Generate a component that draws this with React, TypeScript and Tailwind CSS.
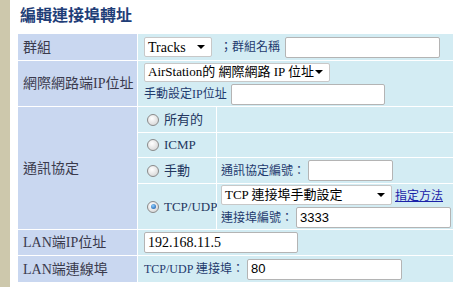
const Radio = ({ checked }: { checked?: boolean }) => (
  <span className="relative inline-block w-[12px] h-[12px] rounded-full border border-[#8a8a8a] bg-[radial-gradient(circle_at_40%_35%,#ffffff,#cfcfcf)] mr-[5px] shrink-0">
    {checked && (
      <span className="absolute left-[2.5px] top-[2.5px] w-[5px] h-[5px] rounded-full bg-[radial-gradient(circle_at_40%_35%,#8fd0ff,#0a4ea0)]" />
    )}
  </span>
);

const Select = ({ text, className }: { text: string; className: string }) => (
  <div
    className={`flex items-center justify-between bg-white border border-[#c8c8c8] rounded-[2px] pl-[3px] pr-[6px] text-[13px] text-black overflow-hidden ${className}`}
  >
    <span className="whitespace-nowrap">{text}</span>
    <span className="w-0 h-0 shrink-0 border-l-[4px] border-r-[4px] border-t-[4px] border-l-transparent border-r-transparent border-t-black" />
  </div>
);

const Input = ({ value, className }: { value?: string; className: string }) => (
  <div
    className={`flex items-center bg-white border border-[#b4b4b4] rounded-[2px] px-[3px] text-[13px] text-black shrink-0 ${className}`}
  >
    {value}
  </div>
);

export default function App() {
  const label = "bg-[#c9d7f0] flex items-center pl-[5px] text-[#3a3a4c] text-[14px] whitespace-nowrap";
  const cell = "bg-[#d3ecf3] flex items-center text-[12px] whitespace-nowrap";

  return (
    <div className="w-[475px] h-[287px] bg-white flex font-['Liberation_Serif','Noto_Sans_CJK_TC',serif] overflow-hidden">
      <div className="w-[10px] bg-[#cdc8ac]" />
      <div className="pl-[8px]">
        <h1 className="h-[33px] pt-[4px] pl-[2px] text-[16px] font-bold text-[#1f3e78] font-['Noto_Sans_CJK_TC',sans-serif] leading-[20px]">
          編輯連接埠轉址
        </h1>
        <div className="grid grid-cols-[119px_78px_236px] grid-rows-[26px_45px_25px_24px_25px_45px_25px_26px] gap-px bg-white w-[435px] mt-px">
          {/* 群組 */}
          <div className={label}>群組</div>
          <div className={`${cell} col-span-2 pl-[6px]`}>
            <Select text="Tracks" className="w-[68px] h-[20px] text-[14px]" />
            <span className="ml-[8px] mr-[5px] text-[#1f3a6e]">；群組名稱</span>
            <Input className="w-[155px] h-[21px]" />
          </div>

          {/* 網際網路端IP位址 */}
          <div className={label}>網際網路端IP位址</div>
          <div className={`${cell} col-span-2 pl-[6px] flex-col !items-start justify-center gap-[2px]`}>
            <Select text="AirStation的 網際網路 IP 位址" className="w-[186px] h-[19px]" />
            <div className="flex items-center">
              <span className="text-[#1f3a6e] mr-[4px]">手動設定IP位址</span>
              <Input className="w-[154px] h-[21px]" />
            </div>
          </div>

          {/* 通訊協定 */}
          <div className={`${label} row-span-4`}>通訊協定</div>
          <div className={`${cell} pl-[9px] text-[#23375f] text-[13px]`}>
            <Radio />
            所有的
          </div>
          <div className={cell} />
          <div className={`${cell} pl-[9px] text-[#23375f] text-[13px]`}>
            <Radio />
            ICMP
          </div>
          <div className={cell} />
          <div className={`${cell} pl-[9px] text-[#23375f] text-[13px]`}>
            <Radio />
            手動
          </div>
          <div className={`${cell} pl-[4px]`}>
            <span className="text-[#1f3a6e] mr-[3px]">通訊協定編號：</span>
            <Input className="w-[85px] h-[21px]" />
          </div>
          <div className={`${cell} pl-[9px] text-[#23375f] text-[13px]`}>
            <Radio checked />
            TCP/UDP
          </div>
          <div className={`${cell} pl-[4px] flex-col !items-start justify-center gap-[2px]`}>
            <div className="flex items-center">
              <Select text="TCP 連接埠手動設定" className="w-[171px] h-[20px]" />
              <a className="ml-[3px] text-[#1a22a8] underline font-['Noto_Sans_CJK_TC',sans-serif]">
                指定方法
              </a>
            </div>
            <div className="flex items-center">
              <span className="text-[#1f3a6e] mr-[3px]">連接埠編號：</span>
              <Input value="3333" className="w-[155px] h-[21px] font-['Liberation_Sans',sans-serif]" />
            </div>
          </div>

          {/* LAN端IP位址 */}
          <div className={label}>LAN端IP位址</div>
          <div className={`${cell} col-span-2 pl-[6px]`}>
            <Input value="192.168.11.5" className="w-[154px] h-[21px] text-[14px]" />
          </div>

          {/* LAN端連線埠 */}
          <div className={label}>LAN端連線埠</div>
          <div className={`${cell} col-span-2 pl-[6px]`}>
            <span className="text-[#1f3a6e] mr-[3px]">TCP/UDP 連接埠：</span>
            <Input value="80" className="w-[155px] h-[21px] font-['Liberation_Sans',sans-serif]" />
          </div>
        </div>
      </div>
    </div>
  );
}
